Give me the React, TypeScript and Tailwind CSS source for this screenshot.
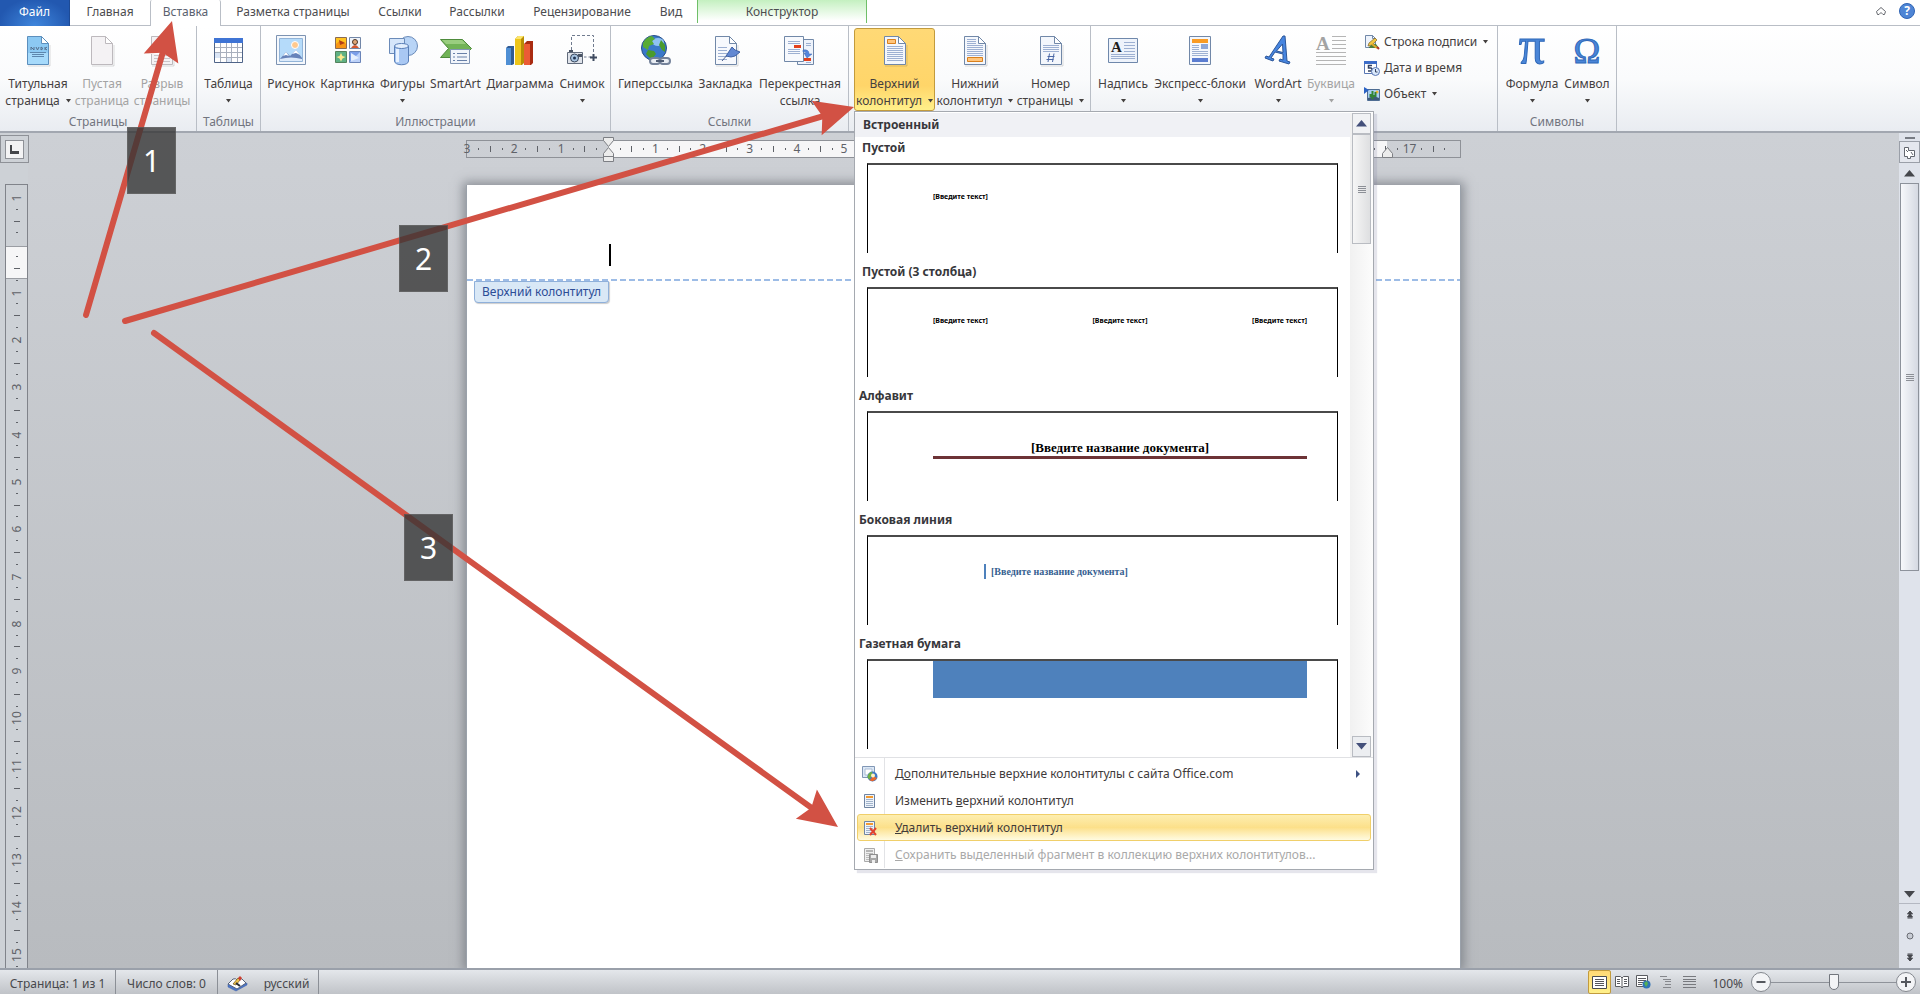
import React, { ReactNode } from "react";

type RibbonButtonProps = {
  lines: string[];
  width: string;
  icon: ReactNode;
  arrow?: boolean;
  disabled?: boolean;
  active?: boolean;
};

const Caret = () => (
  <svg width="5" height="4" viewBox="0 0 5 4" className="inline-block shrink-0">
    <path d="M0 0h5L2.5 3.5z" fill="currentColor" />
  </svg>
);

const RibbonButton = ({ lines, width, icon, arrow, disabled, active }: RibbonButtonProps) => (
  <button
    type="button"
    disabled={disabled}
    className={`flex h-[83px] shrink-0 flex-col items-center border whitespace-nowrap rounded-[3px] pt-[6px] leading-[17px] ${width} ${
      active
        ? "border-[#c29b3d] bg-gradient-to-b from-[#ffd976] via-[#ffd569] to-[#fff08a] via-70%"
        : "border-transparent"
    } ${disabled ? "text-[#a3a3a3]" : "text-[#44403f]"}`}
  >
    <span className="mb-2 flex size-8 items-center justify-center">{icon}</span>
    <span>{lines[0]}</span>
    <span className="flex h-[17px] items-center gap-[6px]">
      {lines[1] && <span>{lines[1]}</span>}
      {arrow && <Caret />}
    </span>
  </button>
);

const RibbonGroup = ({ label, children, pad = "px-1" }: { label?: string; children: ReactNode; pad?: string }) => (
  <section className="relative flex flex-col border-r border-[#b9bec6]">
    <div className={`flex pt-[2px] ${pad}`}>{children}</div>
    {label && <h2 className="pt-[2px] text-center leading-[18px] text-[#72757f]">{label}</h2>}
  </section>
);

const SmallButton = ({ label, icon, arrow }: { label: string; icon: ReactNode; arrow?: boolean }) => (
  <button type="button" className="flex h-[26px] items-center text-[#44403f] whitespace-nowrap">
    <span className="mr-1 size-4">{icon}</span>
    {label}
    {arrow && (
      <span className="ml-[6px] flex">
        <Caret />
      </span>
    )}
  </button>
);

// Sheet of paper with a folded corner, shared by most of the icons
const Sheet = ({ fill = "#f4f7fc", stroke = "#7188a8", children }: { fill?: string; stroke?: string; children?: ReactNode }) => (
  <svg width="32" height="32" viewBox="0 0 32 32">
    <path d="M6 31h22V10" stroke="#00000022" fill="none" />
    <path d="M5.5 1.5h14l7 7v21h-21z" fill={fill} stroke={stroke} />
    <path d="M19.5 1.5v7h7z" fill="#fff" stroke={stroke} />
    {children}
  </svg>
);

const Lines = ({ x, to, ys, color = "#9db0d2" }: { x: number; to: number; ys: number[]; color?: string }) => (
  <path d={ys.map((y) => `M${x} ${y}.5H${to}`).join("")} stroke={color} />
);

const TitlePageIcon = () => (
  <Sheet fill="#8cc9f3" stroke="#5c8fbd">
    <path d="M6 18h20v11H6z" fill="#a6dafb" />
    <path d="M9 15v-3l3 3v-3m2 0 1.500 3 1.500-3m2 3v-3l2 1.500-2 1.500m4-3v3m2-3-2 1.500 2 1.500" stroke="#55708e" fill="none" />
    <Lines x={8} to={24} ys={[17]} color="#5d86ad" />
    <Lines x={10} to={22} ys={[19, 21]} color="#5d86ad" />
  </Sheet>
);

const BreakIcon = () => (
  <Sheet fill="#f4f2f4" stroke="#bdb9bd">
    <path d="M3 13h26v6H3z" fill="#fff" />
    <Lines x={8} to={24} ys={[11, 20, 23, 26]} color="#c9c5c9" />
    <path d="M3 16.500h26" stroke="#b9b9b9" strokeDasharray="3 2" />
  </Sheet>
);

const TableIcon = () => (
  <svg width="32" height="32" viewBox="0 0 32 32">
    <path d="M1.500 4.500h28v23h-28z" fill="#fff" stroke="#4f6488" />
    <path d="M1 3h29v5H1z" fill="#3f74d4" />
    <path d="M7.500 8v19m6-19v19m5-19v19m6-19v19M2 12.500h27M2 17.500h27M2 22.500h27" stroke="#a9b0bd" />
    <path d="M2 18h5v5H2zM14 23h4v4h-4z" fill="#dbe6f6" />
  </svg>
);

const PictureIcon = () => (
  <svg width="32" height="32" viewBox="0 0 32 32">
    <path d="M1.500.5h29v29h-29z" fill="#f5f8fc" stroke="#7d93b2" />
    <path d="M4.500 3.500h23v23h-23z" fill="#b5dbfa" stroke="#92b4d8" />
    <circle cx="20" cy="10" r="3.500" fill="#ffc98d" stroke="#fff" />
    <path d="m5 24 6-7 4 4 6-6 6 8v3H5z" fill="#6783b9" />
    <path d="m8 21 3-4 3 4-3-1zm9-2 4-4 4 5-4-2z" fill="#fff" />
    <path d="M5 24q11-3 22 0v2H5z" fill="#dceafa" />
  </svg>
);

const ClipArtIcon = () => (
  <svg width="32" height="32" viewBox="0 0 32 32">
    <path d="M3.500 2.500h11v11h-11z" fill="#ffc31f" stroke="#8a6a53" />
    <path d="M4 9q5-6 10 0v4H4z" fill="#f79414" />
    <path d="m7 5 6 3-5 2z" fill="#b03f16" />
    <path d="M17.500 2.500h11v11h-11z" fill="#eef2f8" stroke="#7287a8" />
    <circle cx="23" cy="7" r="2.500" fill="#e0a777" stroke="#4a3427" />
    <path d="M19 13q4-6 8 0z" fill="#d4572e" />
    <path d="M3.500 16.500h11v11h-11z" fill="#5fb184" stroke="#54835c" />
    <path d="m9 18 1.500 3 3 1-3 1.500-1.500 3-1.500-3-3-1.500 3-1z" fill="#fbe88c" />
    <path d="M17.500 16.500h11v11h-11z" fill="#bcd1f8" stroke="#6a84b8" />
    <path d="M18 17v10l10-10z" fill="#7b9ee8" />
    <path d="m19 18 8 5-8 3z" fill="#e6effd" />
  </svg>
);

const ShapesIcon = () => (
  <svg width="32" height="32" viewBox="0 0 32 32">
    <circle cx="21" cy="11" r="9.500" fill="#b8d4f6" stroke="#6b8bb9" />
    <path d="M2.500 3.500h15v15h-15z" fill="#d6e6fa" stroke="#6b8bb9" />
    <path d="M7.500 11v15c0 5 14 5 14 0V11" fill="#a9c8f3" stroke="#5b80b8" />
    <ellipse cx="14.500" cy="11" rx="7" ry="2.500" fill="#e3effd" stroke="#5b80b8" />
    <path d="M10.500 14v13" stroke="#e8f2ff" strokeWidth="3" />
  </svg>
);

const SmartArtIcon = () => (
  <svg width="32" height="32" viewBox="0 0 32 32">
    <path d="M.5 4.500h22l9 9-9 9H.5l8-9z" fill="#71b356" stroke="#4e8b3b" />
    <path d="M2 5h20l4 4H6z" fill="#9ace7f" />
    <path d="M10.500 14.500h19v14h-19z" fill="#f1f5fb" stroke="#8195b4" />
    <path d="M13 18.500h2m2 0h10m-14 3.500h2m2 0h10m-14 3.500h2m2 0h10" stroke="#6880a8" />
  </svg>
);

const ChartIcon = () => (
  <svg width="32" height="32" viewBox="0 0 32 32">
    <path d="m2 13 2-2h6v18l-2 1H2z" fill="#2f5b94" />
    <path d="M2 13h5v17H2z" fill="#4f8fd4" />
    <path d="m11 4 3-3h6v27l-2 2h-7z" fill="#b88d05" />
    <path d="M11 4h6v26h-6z" fill="#edc51a" />
    <path d="m20 9 3-3h6v22l-2 2h-7z" fill="#a92b11" />
    <path d="M20 9h6v21h-6z" fill="#eb5b35" />
    <path d="m11 4 3-3h6l-3 3z" fill="#fbe56c" />
  </svg>
);

const ScreenshotIcon = () => (
  <svg width="32" height="32" viewBox="0 0 32 32">
    <path d="M5.500 15V.5h22V22H18" fill="none" stroke="#707b8f" strokeDasharray="3 2" />
    <path d="M24 22.500h7M27.500 19v7" stroke="#3e4a5f" strokeWidth="2" />
    <path d="M1.500 17.500h15v11h-15z" fill="#dfe3ea" stroke="#616b7b" />
    <path d="M3 15h4v2H3zm9 4h4v3h-4z" fill="#4a5464" />
    <circle cx="8.500" cy="23" r="4" fill="#a7c3e0" stroke="#39465a" />
    <circle cx="8.500" cy="23" r="1.500" fill="#1f3350" />
  </svg>
);

const HyperlinkIcon = () => (
  <svg width="32" height="32" viewBox="0 0 32 32">
    <circle cx="14" cy="13" r="12.500" fill="#3a78c9" stroke="#274f86" />
    <ellipse cx="18" cy="7" rx="6" ry="4" fill="#8fc1f3" />
    <path d="M3 8q3-6 9-7l3 3-3 2 2 3-5 2-1 4-5-3z" fill="#58ab35" />
    <path d="m8 15 6 1 2 3-4 5q-4-2-6-5zM21 5l4 5v7l-3-2-3-5z" fill="#4a9b2c" />
    <g fill="none" stroke="#74829a" strokeWidth="2">
      <rect x="10" y="23" width="10" height="6" rx="3" fill="#e9edf3" />
      <rect x="20" y="23" width="10" height="6" rx="3" fill="#e9edf3" />
      <path d="M16 26h8" stroke="#4f5c73" />
    </g>
  </svg>
);

const BookmarkIcon = () => (
  <Sheet fill="#f7f9fd">
    <Lines x={8} to={17} ys={[12, 15, 18, 21, 24]} />
    <path d="m12 26 6-7" stroke="#4b5f8e" />
    <path d="m16 21 6-9 3 3 5 2-5 4-4 1z" fill="#6288d2" stroke="#4062a5" />
  </Sheet>
);

const CrossRefIcon = () => (
  <svg width="32" height="32" viewBox="0 0 32 32">
    <path d="M13.500 4.500h16v25h-16z" fill="#eef3fb" stroke="#7188a8" />
    <path d="M.5 1.500h19v25H.5z" fill="#f7f9fd" stroke="#7188a8" />
    <Lines x={4} to={16} ys={[6, 8, 14, 16, 18]} />
    <Lines x={22} to={27} ys={[8, 10, 27]} />
    <path d="M10 10h7v3h-7zM20 23h7v3h-7z" fill="#e2401c" />
    <path d="M19 15q6-1 6 4h3l-5 4-3-5h2q0-2-3-1z" fill="#5585dc" stroke="#3a64b3" strokeWidth=".5" />
  </svg>
);

const HeaderIcon = () => (
  <Sheet>
    <path d="M8.500 4.500h8v4h-8z" fill="#ffc57c" stroke="#d9801d" />
    <Lines x={8} to={24} ys={[11, 13, 15, 17, 19, 21, 23, 25]} />
  </Sheet>
);

const FooterIcon = () => (
  <Sheet>
    <Lines x={8} to={17} ys={[4, 6, 8]} />
    <Lines x={8} to={24} ys={[10, 12, 14, 16, 18, 20]} />
    <path d="M8.500 22.500h15v4h-15z" fill="#ffc57c" stroke="#d9801d" />
  </Sheet>
);

const PageNumberIcon = () => (
  <Sheet>
    <Lines x={8} to={24} ys={[10, 12, 14, 16]} />
    <path d="M14.500 18.500 13 27m6-8.500L17.500 27m-5-5.500h7m-8 3h7" stroke="#4b68a7" fill="none" />
  </Sheet>
);

const TextBoxIcon = () => (
  <svg width="32" height="32" viewBox="0 0 32 32">
    <path d="M1.500 3.500h29v24h-29z" fill="#eef3fb" stroke="#6f88ab" />
    <Lines x={17} to={28} ys={[7, 10, 13, 16]} />
    <Lines x={4} to={28} ys={[19, 21, 23]} />
    <text x="4" y="17" fontSize="15" fontWeight="bold" fontFamily="Liberation Serif, serif" fill="#1c1c1c">A</text>
  </svg>
);

const QuickPartsIcon = () => (
  <svg width="32" height="32" viewBox="0 0 32 32">
    <path d="M5.500 1.500h21v28h-21z" fill="#f4f7fc" stroke="#7188a8" />
    <path d="M8 4h16v4H8z" fill="#f99b24" />
    <Lines x={8} to={15} ys={[10, 12, 14]} />
    <path d="M17 9h7v5h-7z" fill="#8ea7d8" />
    <Lines x={8} to={24} ys={[16, 18, 20]} />
    <path d="M8 23h16v4H8z" fill="#5b7dd0" />
  </svg>
);

const WordArtIcon = () => (
  <svg width="32" height="32" viewBox="0 0 32 32">
    <path d="M21 1h2l2 25 3 1-1 2-10-3 1-2 3 1v-6l-8-2-4 6 3 1-1 2-8-3 1-2 3 1zm-.5 8-6 7 6.500 1.500z" fill="#4685e0" stroke="#2c5699" />
  </svg>
);

const DropCapIcon = () => (
  <svg width="32" height="32" viewBox="0 0 32 32">
    <text x="1" y="15" fontSize="19" fontWeight="bold" fontFamily="Liberation Serif, serif" fill="#a3a3a3">A</text>
    <Lines x={17} to={31} ys={[1, 5, 9, 13]} color="#b5b5b5" />
    <Lines x={1} to={31} ys={[17, 21, 25, 29]} color="#b5b5b5" />
  </svg>
);

const SymbolIcon = ({ size, children }: { size: number; children: string }) => (
  <svg width="32" height="32" viewBox="0 0 32 32" className="overflow-visible">
    <text x="16" y="28" textAnchor="middle" fontSize={size} fontFamily="Liberation Serif, serif" fill="#4a86d8" stroke="#2f68b8">
      {children}
    </text>
  </svg>
);

const SignatureIcon = () => (
  <svg width="16" height="16" viewBox="0 0 16 16">
    <path d="M1.500 1.500h7l3 3v9h-10z" fill="#eef3fb" stroke="#7188a8" />
    <path d="M8.500 1.500v3h3z" fill="#fff" stroke="#7188a8" />
    <path d="m5 9 6-5 2 2-5 5-4 1z" fill="#f3c540" stroke="#80642a" strokeWidth=".7" />
    <path d="M5 13q4-4 7-3l3 4H5z" fill="#4f7d3b" />
    <path d="m8 10 5 4" stroke="#e0a82c" strokeWidth="2" />
    <path d="m13 13 2 2" stroke="#b53526" strokeWidth="2" />
  </svg>
);

const DateIcon = () => (
  <svg width="16" height="16" viewBox="0 0 16 16">
    <path d="M.5 1.500h12v12H.5z" fill="#fff" stroke="#5876b3" />
    <path d="M0 1h13v3H0z" fill="#3d6dc8" />
    <path d="M8 5.500H4.500V8H7q1 .5 1 1.500T7 11H4" fill="none" stroke="#33415f" strokeWidth="1.500" />
    <circle cx="11.500" cy="11.500" r="4" fill="#d9e8fb" stroke="#5876b3" />
    <path d="M11.500 9v3h2" fill="none" stroke="#33415f" />
  </svg>
);

const ObjectIcon = () => (
  <svg width="16" height="16" viewBox="0 0 16 16">
    <path d="M3.500 3.500h12v11h-12z" fill="#a8cdf0" stroke="#4e6c92" />
    <path d="M4 12q6-3 11 0v2H4z" fill="#3d5a78" />
    <circle cx="13" cy="6" r="1.500" fill="#f5b731" />
    <path d="M8.500 13V5m-2 3v2h5V6" fill="none" stroke="#328434" strokeWidth="2" />
    <path d="m0 1 5 3-5 4z" fill="#2b62c4" />
  </svg>
);

const MiniSheet = ({ gray, children }: { gray?: boolean; children?: ReactNode }) => (
  <svg width="16" height="16" viewBox="0 0 16 16">
    <path d="M2.500 1.500h10v13h-10z" fill={gray ? "#efefef" : "#eef4fb"} stroke={gray ? "#aaaaaa" : "#6f84a2"} />
    <path d="M4 3h7v2H4z" fill={gray ? "#b5b5b5" : "#f39a30"} />
    <Lines x={4} to={11} ys={[6, 8, 10, 12]} color={gray ? "#bbbbbb" : "#a1b3cb"} />
    {children}
  </svg>
);

const OfficeComIcon = () => (
  <svg width="16" height="16" viewBox="0 0 16 16">
    <path d="M.5.5h12v11H.5z" fill="#dce8f6" stroke="#8197b5" />
    <path d="M3 3h7v6H3z" fill="#fff" stroke="#a9bcd5" />
    <circle cx="10.500" cy="10.500" r="5" fill="#3f78c8" />
    <path d="M5.500 10.500q1-4 5-5l-1 4-2 4q-2-1-2-3z" fill="#6fb243" />
    <path d="M7 14q3-1 3-4l5 2q-3 5-8 2z" fill="#e8672c" />
    <circle cx="11" cy="9.500" r="2" fill="#fff3c0" />
  </svg>
);

// Four marks per centimetre: number, dot, bar, dot
const rulerMark = (quarter: number) => {
  if (quarter === 0) return "";
  const rest = Math.abs(quarter) % 4;
  if (rest === 0) return String(Math.abs(quarter) / 4);
  return rest === 2 ? "|" : "·";
};

const Mark = ({ mark }: { mark: string }) => {
  if (mark === "|") return <i className="h-[6px] w-px shrink-0 bg-[#5f6268]" />;
  if (mark === "·") return <i className="h-[2px] w-px shrink-0 bg-[#5f6268]" />;
  return <span>{mark}</span>;
};

const HorizontalRuler = () => {
  const marks = Array.from({ length: 84 }, (_, i) => rulerMark(i - 12));
  return (
    <div className="relative mx-auto flex h-[18px] w-[995px] border border-[#8e9197] text-[#5f6268]">
      <div className="w-[141px] shrink-0" />
      <div className="w-[779px] shrink-0 bg-[#f6f6f7]" />
      <div className="absolute inset-0 flex items-center justify-between pr-[14px]">
        {marks.map((mark, i) => (
          <span key={i} className="flex w-0 items-center justify-center">
            <Mark mark={mark} />
          </span>
        ))}
      </div>
      <svg className="absolute -top-[5px] left-[135px]" width="13" height="28" viewBox="0 0 13 28">
        <path d="M1.500 1.500h10v3l-5 6-5-6zM6.500 11.500l5 6v8h-10v-8zM2 20.500h9" fill="#ececec" stroke="#7d7f84" />
      </svg>
      <svg className="absolute top-[6px] left-[914px]" width="13" height="11" viewBox="0 0 13 11">
        <path d="m6.500.5 5 6v4h-10v-4z" fill="#ececec" stroke="#7d7f84" />
      </svg>
    </div>
  );
};

const VerticalRuler = () => {
  const marks = Array.from({ length: 66 }, (_, i) => rulerMark(i - 4));
  return (
    <div className="relative flex w-[18px] flex-1 flex-col border border-b-0 border-[#80838a] text-[#5f6268]">
      <div className="h-[61px] shrink-0" />
      <div className="h-[33px] shrink-0 border-y border-[#9a9da3] bg-[#f6f6f7]" />
      <div className="absolute inset-0 flex flex-col items-center justify-between pt-[13px] pb-px">
        {marks.map((mark, i) => (
          <span key={i} className="flex h-0 w-4 -rotate-90 items-center justify-center">
            <Mark mark={mark} />
          </span>
        ))}
      </div>
    </div>
  );
};

type PreviewProps = { title: string; head?: string; children: ReactNode };

const Preview = ({ title, head = "h-[34px] pl-1", children }: PreviewProps) => (
  <button type="button" className="block w-full text-left">
    <span className={`flex items-end pb-[7px] leading-4 font-bold text-[#37373b] ${head}`}>{title}</span>
    <span className="mr-3 ml-3 flex h-[90px] flex-col border border-t-2 border-b-0 border-black border-t-[#4a4a4a] pr-[30px] pl-[65px] text-black">
      {children}
    </span>
  </button>
);

type MenuItemProps = { icon: ReactNode; children: ReactNode; active?: boolean; disabled?: boolean; more?: boolean };

const MenuItem = ({ icon, children, active, disabled, more }: MenuItemProps) => (
  <button
    type="button"
    disabled={disabled}
    className={`flex h-[27px] w-full items-center text-left ${disabled ? "text-[#a9a9a9]" : "text-[#3f3b3b]"} ${
      active ? "rounded-[3px] border border-[#f0cf6a] bg-gradient-to-b from-[#fdeeb0] via-[#fce08a] to-[#fffbe0]" : "border border-transparent"
    }`}
  >
    <span className="ml-1 flex w-[33px]">{icon}</span>
    <span className="flex-1">{children}</span>
    {more && (
      <svg width="4" height="8" viewBox="0 0 4 8" className="mr-[10px]">
        <path d="m0 0 4 4-4 4z" fill="#3c5082" />
      </svg>
    )}
  </button>
);

const Grip = () => (
  <span className="flex flex-col gap-px">
    <i className="h-px w-2 bg-[#8c8f96]" />
    <i className="h-px w-2 bg-[#8c8f96]" />
    <i className="h-px w-2 bg-[#8c8f96]" />
    <i className="h-px w-2 bg-[#8c8f96]" />
  </span>
);

const Triangle = ({ up, color }: { up?: boolean; color: string }) => (
  <svg width="11" height="7" viewBox="0 0 11 7">
    <path d={up ? "M0 6.500 5.500 0 11 6.500z" : "M0 0h11L5.500 6.500z"} fill={color} />
  </svg>
);

const HeaderMenu = () => (
  <div className="absolute top-[85px] left-[5px] z-20 w-[520px] border border-[#a5a9b0] bg-white pt-px pb-px shadow-[3px_3px_1px_#7c7ca033]">
    <div className="flex">
      <div className="h-[644px] min-w-0 flex-1">
        <h3 className="flex h-6 items-center bg-[#f0f1f5] pl-2 font-bold text-[#37373b]">Встроенный</h3>
        <Preview title="Пустой" head="h-[26px] pl-[7px]">
          <span className="pt-[26px] text-[7px] leading-3 font-bold">[Введите текст]</span>
        </Preview>
        <Preview title="Пустой (3 столбца)" head="h-[34px] pl-[7px]">
          <span className="flex justify-between pt-[26px] text-[7px] leading-3 font-bold">
            <span>[Введите текст]</span>
            <span>[Введите текст]</span>
            <span>[Введите текст]</span>
          </span>
        </Preview>
        <Preview title="Алфавит">
          <span className="mt-[27px] border-b-[3px] border-[#6d3336] text-center font-[Liberation_Serif,serif] text-[13px] leading-4 font-bold">
            [Введите название документа]
          </span>
        </Preview>
        <Preview title="Боковая линия">
          <span className="mt-[27px] ml-[51px] border-l-2 border-[#4e81bc] pl-[5px] font-[Liberation_Serif,serif] text-[10px] leading-[15px] font-bold text-[#365f91]">
            [Введите название документа]
          </span>
        </Preview>
        <Preview title="Газетная бумага">
          <span className="h-[37px] bg-[#4e81bc]" />
        </Preview>
      </div>
      <div className="flex w-[23px] flex-col items-center bg-gradient-to-r from-[#f1f1f1] to-[#fcfcfc]">
        <button type="button" aria-label="Вверх" className="flex h-[21px] w-[19px] items-center justify-center border border-[#b9bcc2] bg-[#f1f2f4]">
          <Triangle up color="#44507a" />
        </button>
        <div className="flex h-[110px] w-[19px] items-center justify-center border border-[#b9bcc2] bg-gradient-to-r from-[#f6f6f6] to-[#dedfe1]">
          <Grip />
        </div>
        <button type="button" aria-label="Вниз" className="mt-auto flex h-[21px] w-[19px] items-center justify-center border border-[#b9bcc2] bg-[#eceef1]">
          <Triangle color="#44507a" />
        </button>
      </div>
    </div>
    <div className="border-t border-[#e0e1e4] bg-[linear-gradient(to_right,transparent_29px,#e2e3e6_29px,#e2e3e6_30px,transparent_30px)] px-[2px] pt-[2px]">
      <MenuItem icon={<OfficeComIcon />} more>
        Д<u>о</u>полнительные верхние колонтитулы с сайта Office.com
      </MenuItem>
      <MenuItem icon={<MiniSheet />}>
        Изменить <u>в</u>ерхний колонтитул
      </MenuItem>
      <MenuItem
        active
        icon={
          <MiniSheet>
            <path d="m8 8 6 7m0-7-6 7" stroke="#e2442f" strokeWidth="2" />
          </MiniSheet>
        }
      >
        <u>У</u>далить верхний колонтитул
      </MenuItem>
      <MenuItem
        disabled
        icon={
          <MiniSheet gray>
            <path d="M7.500 7.500h8v8h-8z" fill="#a8a8a8" stroke="#8f8f8f" />
            <path d="M9 8h5v3H9zm1 5h3v3h-3z" fill="#eee" />
          </MiniSheet>
        }
      >
        <u>С</u>охранить выделенный фрагмент в коллекцию верхних колонтитулов...
      </MenuItem>
    </div>
  </div>
);

const Tabs = () => (
  <nav className="flex h-[26px] bg-white leading-[24px] text-[#4c4c4f] *:pb-[2px]">
    <button type="button" className="w-[70px] border-r border-[#1d4a95] bg-[radial-gradient(ellipse_at_bottom,#3f86dc,#2258b0_75%)] text-white">
      Файл
    </button>
    <button type="button" className="w-[80px] border-b border-[#b9bec6]">Главная</button>
    <button type="button" className="w-[71px] rounded-t-[2px] border-x border-[#b9bec6] text-[#5b6270]">Вставка</button>
    <div className="flex flex-1 border-b border-[#b9bec6]">
      <button type="button" className="w-[144px]">Разметка страницы</button>
      <button type="button" className="w-[70px]">Ссылки</button>
      <button type="button" className="w-[84px]">Рассылки</button>
      <button type="button" className="w-[126px]">Рецензирование</button>
      <button type="button" className="w-[52px]">Вид</button>
      <button type="button" className="w-[170px] border-x border-[#6fbf68] bg-gradient-to-b from-[#c4f0c0] to-white to-90%">
        Конструктор
      </button>
      <div className="ml-auto flex items-start gap-[13px] pt-[3px] pr-[5px]">
        <button type="button" aria-label="Свернуть ленту" className="flex h-4 items-center">
          <svg width="10" height="8" viewBox="0 0 10 8">
            <path d="M.5 4.500 5 .5l4.500 4-1 3H7L5 5.500l-2 2H1.500z" fill="#fff" stroke="#63666d" />
          </svg>
        </button>
        <button type="button" aria-label="Справка" className="flex size-4 items-center justify-center rounded-full border border-[#2f64b5] bg-[#4e85d5] font-bold text-white">
          ?
        </button>
      </div>
    </div>
  </nav>
);

const Ribbon = () => (
  <div className="flex h-[107px] border-b-2 border-[#a2a7b0] bg-gradient-to-b from-white via-[#fafbfc] to-[#e9ecf1]">
    <RibbonGroup label="Страницы" pad="px-[2px]">
      <RibbonButton width="w-[72px]" lines={["Титульная", "страница"]} icon={<TitlePageIcon />} arrow />
      <RibbonButton width="w-[56px]" lines={["Пустая", "страница"]} icon={<Sheet fill="#f4f2f4" stroke="#bdb9bd" />} disabled />
      <RibbonButton width="w-[64px]" lines={["Разрыв", "страницы"]} icon={<BreakIcon />} disabled />
    </RibbonGroup>
    <RibbonGroup label="Таблицы">
      <RibbonButton width="w-[55px]" lines={["Таблица"]} icon={<TableIcon />} arrow />
    </RibbonGroup>
    <RibbonGroup label="Иллюстрации" pad="pl-1 pr-[2px]">
      <RibbonButton width="w-[52px]" lines={["Рисунок"]} icon={<PictureIcon />} />
      <RibbonButton width="w-[61px]" lines={["Картинка"]} icon={<ClipArtIcon />} />
      <RibbonButton width="w-[49px]" lines={["Фигуры"]} icon={<ShapesIcon />} arrow />
      <RibbonButton width="w-[57px]" lines={["SmartArt"]} icon={<SmartArtIcon />} />
      <RibbonButton width="w-[72px]" lines={["Диаграмма"]} icon={<ChartIcon />} />
      <RibbonButton width="w-[52px]" lines={["Снимок"]} icon={<ScreenshotIcon />} arrow />
    </RibbonGroup>
    <RibbonGroup label="Ссылки" pad="pl-1 pr-[3px]">
      <RibbonButton width="w-[81px]" lines={["Гиперссылка"]} icon={<HyperlinkIcon />} />
      <RibbonButton width="w-[59px]" lines={["Закладка"]} icon={<BookmarkIcon />} />
      <RibbonButton width="w-[90px]" lines={["Перекрестная", "ссылка"]} icon={<CrossRefIcon />} />
    </RibbonGroup>
    <RibbonGroup pad="pl-[5px] pr-1">
      <RibbonButton width="w-[81px]" lines={["Верхний", "колонтитул"]} icon={<HeaderIcon />} arrow active />
      <RibbonButton width="w-[80px]" lines={["Нижний", "колонтитул"]} icon={<FooterIcon />} arrow />
      <RibbonButton width="w-[71px]" lines={["Номер", "страницы"]} icon={<PageNumberIcon />} arrow />
      <HeaderMenu />
    </RibbonGroup>
    <RibbonGroup pad="pl-[5px] pr-4">
      <RibbonButton width="w-[54px]" lines={["Надпись"]} icon={<TextBoxIcon />} arrow />
      <RibbonButton width="w-[100px]" lines={["Экспресс-блоки"]} icon={<QuickPartsIcon />} arrow />
      <RibbonButton width="w-[56px]" lines={["WordArt"]} icon={<WordArtIcon />} arrow />
      <RibbonButton width="w-[50px]" lines={["Буквица"]} icon={<DropCapIcon />} arrow disabled />
      <div className="ml-2 flex w-[117px] flex-col pt-px">
        <SmallButton label="Строка подписи" icon={<SignatureIcon />} arrow />
        <SmallButton label="Дата и время" icon={<DateIcon />} />
        <SmallButton label="Объект" icon={<ObjectIcon />} arrow />
      </div>
    </RibbonGroup>
    <RibbonGroup label="Символы">
      <RibbonButton width="w-[60px]" lines={["Формула"]} icon={<SymbolIcon size={52}>π</SymbolIcon>} arrow />
      <RibbonButton width="w-[50px]" lines={["Символ"]} icon={<SymbolIcon size={36}>Ω</SymbolIcon>} arrow />
    </RibbonGroup>
  </div>
);

const PageScrollbar = () => (
  <div className="flex w-[21px] shrink-0 flex-col items-center bg-[#dfe3eb] pt-1">
    <i className="h-[2px] w-[10px] bg-[#777b83]" />
    <button type="button" aria-label="Линейка" className="mt-[2px] flex h-[22px] w-full items-center justify-center border border-[#9a9fa8] bg-[#e4e7ee]">
      <svg width="13" height="13" viewBox="0 0 13 13">
        <path d="M1.500 1.500h4v3h6v6h-4v2h-3v-2h-3zM3 4l2 2m3 0 2 3" fill="#fff" stroke="#62666e" />
      </svg>
    </button>
    <span className="flex h-5 items-center">
      <Triangle up color="#45474c" />
    </span>
    <div className="flex h-[388px] w-[19px] items-center justify-center border border-[#8d929b] bg-gradient-to-r from-[#f7f8fb] to-[#d5d9e2]">
      <Grip />
    </div>
    <div className="mt-auto flex w-full flex-col items-center text-[#45474c]">
      <span className="flex h-[19px] w-full items-center justify-center border-b border-[#b4b8c2]">
        <Triangle color="#45474c" />
      </span>
      <svg width="8" height="64" viewBox="0 0 8 64">
        <path d="m4 7 2.500 3h-5zm0 3 2.500 3h-5zM1.500 14h5M4 57l2.500-3h-5zm0-3 2.500-3h-5zM1.500 50h5" fill="#45474c" stroke="#45474c" />
        <circle cx="4" cy="32" r="3" fill="#c8ccd4" stroke="#6a6d74" />
      </svg>
    </div>
  </div>
);

const StatusCell = ({ children, width }: { children: ReactNode; width: string }) => (
  <span className={`flex h-full items-center justify-center border-r border-[#8b8f96] pt-[3px] ${width}`}>{children}</span>
);

const StatusBar = () => (
  <footer className="flex h-[26px] items-center border-t-2 border-[#9aa0aa] bg-gradient-to-b from-[#e4e7eb] to-[#c0c3c8] text-[#47484c] whitespace-nowrap">
    <StatusCell width="w-[116px]">Страница: 1 из 1</StatusCell>
    <StatusCell width="w-[102px]">Число слов: 0</StatusCell>
    <StatusCell width="w-[101px] gap-4">
      <svg width="21" height="17" viewBox="0 0 21 17">
        <path d="M1 9v3l8 4 11-6V8l-9 4z" fill="#4c76c9" stroke="#3a5ca3" strokeWidth=".5" />
        <path d="m1 9 5-5q3-1 4 1 2-3 5-1l4 4-9 6z" fill="#fff" stroke="#55617a" />
        <path d="m6 9 5-6 2 2-4 5z" fill="#eec14a" stroke="#6a5320" strokeWidth=".7" />
        <path d="m9 8 4 3" stroke="#2c2f36" strokeWidth="2" />
        <path d="m11 3 2-2 2 2-2 3z" fill="#cc3f30" />
      </svg>
      русский
    </StatusCell>
    <div className="ml-auto flex h-full items-center pr-1">
      <button type="button" aria-label="Разметка страницы" className="flex h-full w-[23px] items-center justify-center rounded-[2px] border border-[#c29b3d] bg-gradient-to-b from-[#ffd976] to-[#fff08a]">
        <svg width="15" height="13" viewBox="0 0 15 13">
          <path d="M.5.5h14v12H.5z" fill="#fff" stroke="#4a4c50" />
          <path d="M3 3.500h9m-9 2h9m-9 2h9m-9 2h9" stroke="#55575c" />
        </svg>
      </button>
      <button type="button" aria-label="Режим чтения" className="ml-1">
        <svg width="14" height="14" viewBox="0 0 14 14">
          <path d="M.5 1.500h5L7 3l1.500-1.500h5v10h-5L7 13l-1.500-1.500h-5zM7 3v10" fill="#fff" stroke="#5a5c61" />
          <path d="M2 4.500h3m-3 2h3m-3 2h3m4-4h3m-3 2h3m-3 2h3" stroke="#5a5c61" />
        </svg>
      </button>
      <button type="button" aria-label="Веб-документ" className="ml-[7px]">
        <svg width="15" height="14" viewBox="0 0 15 14">
          <path d="M.5.5h11v11H.5z" fill="#fff" stroke="#5a5c61" />
          <path d="M2 3.500h8m-8 2h8m-8 2h5m-5 2h4" stroke="#5a5c61" />
          <circle cx="10.500" cy="9.500" r="4" fill="#2f73b5" />
          <path d="m8 8 3-2 1 3-2 3z" fill="#54b054" />
        </svg>
      </button>
      <button type="button" aria-label="Структура" className="ml-[9px]">
        <svg width="12" height="12" viewBox="0 0 12 12">
          <path d="M0 .5h7m-4 3h8m-6 2h6m-6 3h6m-8 3h8" stroke="#85878c" />
        </svg>
      </button>
      <button type="button" aria-label="Черновик" className="ml-[11px]">
        <svg width="13" height="12" viewBox="0 0 13 12">
          <path d="M0 .5h13m-13 3h13m-13 2h13m-13 3h13m-13 3h13" stroke="#77797e" />
        </svg>
      </button>
      <span className="ml-4 pt-[3px]">100%</span>
      <button type="button" aria-label="Уменьшить" className="ml-2">
        <svg width="20" height="20" viewBox="0 0 20 20">
          <circle cx="10" cy="10" r="9.500" fill="#f3f4f6" stroke="#84888f" />
          <path d="M5.500 10h9" stroke="#55585e" strokeWidth="2" />
        </svg>
      </button>
      <input
        type="range"
        aria-label="Масштаб"
        defaultValue={50}
        className="h-5 w-[125px] appearance-none bg-[linear-gradient(#8f939a,#8f939a)] bg-[length:100%_1px] bg-center bg-no-repeat [&::-webkit-slider-thumb]:h-4 [&::-webkit-slider-thumb]:w-[10px] [&::-webkit-slider-thumb]:appearance-none [&::-webkit-slider-thumb]:rounded-b-[5px] [&::-webkit-slider-thumb]:border [&::-webkit-slider-thumb]:border-[#72767d] [&::-webkit-slider-thumb]:bg-[#f3f4f6]"
      />
      <button type="button" aria-label="Увеличить">
        <svg width="20" height="20" viewBox="0 0 20 20">
          <circle cx="10" cy="10" r="9.500" fill="#f3f4f6" stroke="#84888f" />
          <path d="M5 10h10M10 5v10" stroke="#55585e" strokeWidth="2" />
        </svg>
      </button>
    </div>
  </footer>
);

const Arrow = ({ from, to }: { from: [number, number]; to: [number, number] }) => {
  const dx = to[0] - from[0];
  const dy = to[1] - from[1];
  const length = Math.hypot(dx, dy);
  const angle = (Math.atan2(dy, dx) * 180) / Math.PI;
  return (
    <g transform={`translate(${from[0]} ${from[1]}) rotate(${angle})`}>
      <path d={`M0 0H${length - 33}`} stroke="#d25144" strokeWidth="6" strokeLinecap="round" />
      <path d={`M${length} 0l-39 18 6-18-6-18z`} fill="#d25144" />
    </g>
  );
};

const Step = ({ place, children }: { place: string; children: ReactNode }) => (
  <div className={`absolute flex h-[67px] w-[49px] items-center justify-center border border-[#8888884d] bg-[#353535c9] text-[30px] leading-none text-white ${place}`}>
    {children}
  </div>
);

const Annotations = () => (
  <div className="pointer-events-none absolute inset-0 z-30 overflow-hidden">
    <svg className="absolute top-0 left-0" width="900" height="900" viewBox="0 0 900 900">
      <Arrow from={[86, 315]} to={[172, 21]} />
      <Arrow from={[125, 321]} to={[854, 107]} />
      <Arrow from={[154, 333]} to={[838, 827]} />
    </svg>
    <Step place="left-[127px] top-[127px]">1</Step>
    <Step place="left-[399px] top-[225px]">2</Step>
    <Step place="left-[404px] top-[514px]">3</Step>
  </div>
);

const App = () => (
  <div className="relative flex min-h-screen flex-col overflow-hidden font-['Noto_Sans',sans-serif] text-[12px]">
    <Tabs />
    <Ribbon />
    <main className="flex flex-1 bg-gradient-to-b from-[#cdd0d5] to-[#b8bbbf]">
      <div className="flex w-7 shrink-0 flex-col bg-[#cdd1d6] pt-[2px]">
        <button type="button" aria-label="Табуляция" className="mb-[21px] flex h-7 w-[29px] items-center justify-center border border-[#8e9197]">
          <span className="flex size-[19px] items-center justify-center border border-[#8e9197] bg-[#f3f3f4]">
            <i className="size-[9px] border-b-[3px] border-l-2 border-[#44464a]" />
          </span>
        </button>
        <div className="flex flex-1 pl-[5px]">
          <VerticalRuler />
        </div>
      </div>
      <div className="flex min-w-0 flex-1 flex-col pt-[7px]">
        <HorizontalRuler />
        <article className="mx-auto mt-[27px] w-[995px] flex-1 border-x border-[#9aa1aa] bg-white shadow-[0_0_10px_3px_#6b6f76aa]">
          <div className="flex h-[94px] items-end pb-[13px] pl-[142px]">
            <i className="h-[22px] w-[2px] bg-black" />
          </div>
          <div className="h-[2px] bg-[repeating-linear-gradient(to_right,#9dbce6_0,#9dbce6_6px,transparent_6px,transparent_9px)]" />
          <span className="ml-[7px] flex h-[22px] w-[135px] items-center justify-center rounded-b-[4px] border border-[#8fb0da] bg-[#d9e8f6] text-[#2c4d96] shadow-[1px_1px_1px_#00000033]">
            Верхний колонтитул
          </span>
        </article>
      </div>
      <PageScrollbar />
    </main>
    <StatusBar />
    <Annotations />
  </div>
);

export default App;
